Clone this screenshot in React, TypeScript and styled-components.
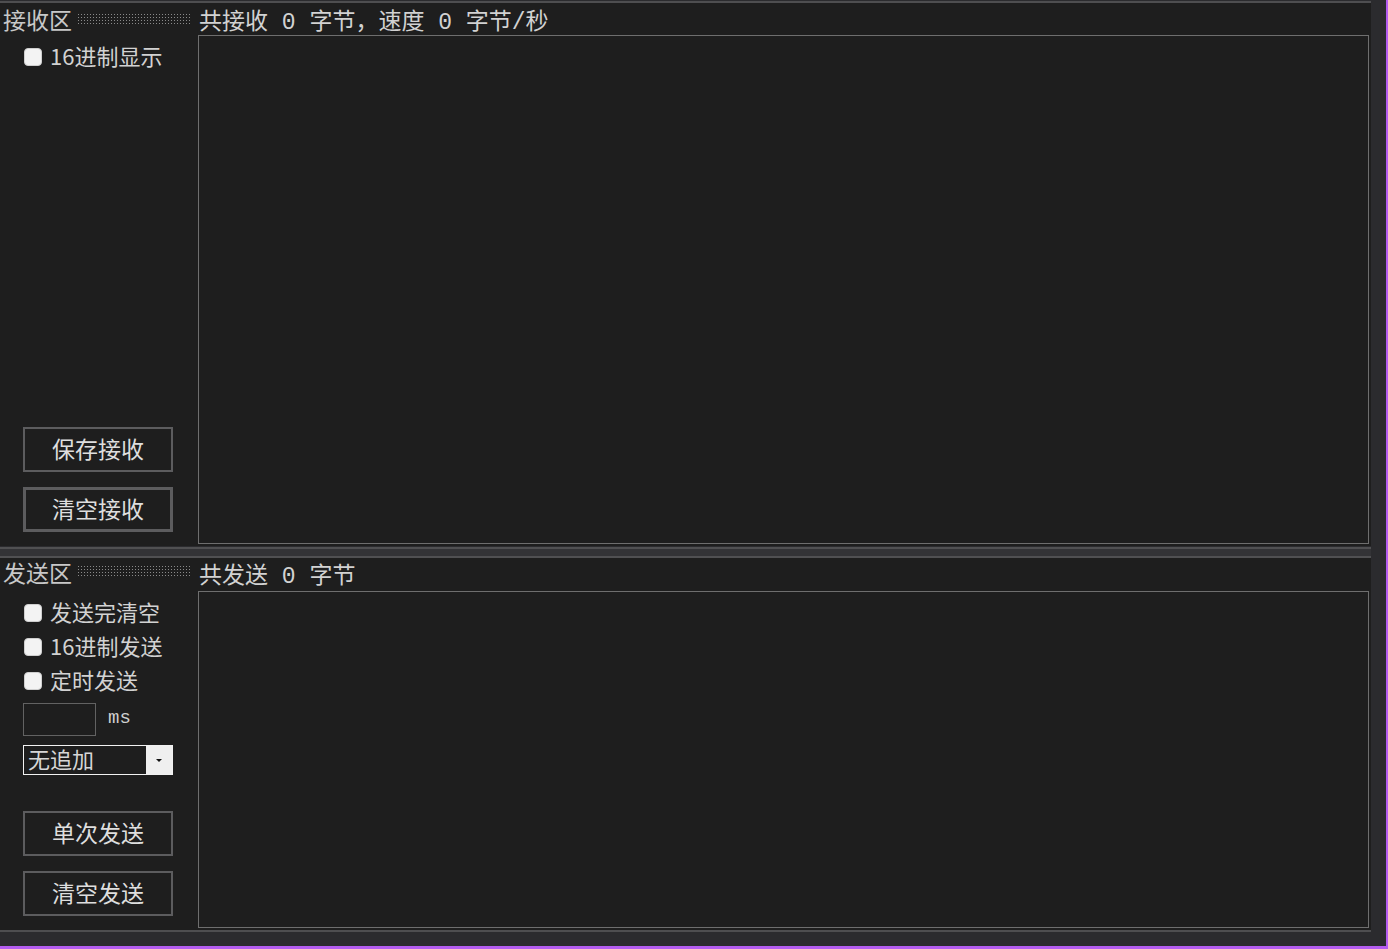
import React from "react";
import styled, { createGlobalStyle } from "styled-components";

const Global = createGlobalStyle`
  html, body { margin: 0; padding: 0; background: #2b2b2e; }
  body { font-family: "Noto Sans CJK SC", "Liberation Sans", sans-serif; }
  * { box-sizing: border-box; }
`;

const MONO = `"Liberation Mono", "Noto Sans CJK SC", monospace`;

const Frame = styled.div`
  width: 1388px;
  height: 949px;
  display: flex;
  background: #2b2b2e;
  border-right: 2px solid #b45cf0;
  border-bottom: 3px solid #b45cf0;
  overflow: hidden;
`;

const Main = styled.div`
  width: 1371px;
  display: flex;
  flex-direction: column;
`;

const Rule = styled.div<{ $top?: number }>`
  height: 2px;
  margin-top: ${(p) => p.$top ?? 0}px;
  background: #4e4e50;
`;

const Separator = styled.div`
  height: 11px;
  margin-top: 1px;
  background: #333336;
  border-top: 2px solid #505052;
  border-bottom: 2px solid #505052;
`;

const Panel = styled.section<{ $height: number; $head: number }>`
  height: ${(p) => p.$height}px;
  background: #1e1e1e;
  display: grid;
  grid-template-columns: 198px 1fr;
  grid-template-rows: ${(p) => p.$head}px 1fr;
  padding: 0 2px 2px 0;
  color: #d2d2d2;
  font-size: 22px;
`;

const HeadLeft = styled.div<{ $top?: number; $bottom?: number }>`
  display: flex;
  align-items: center;
  padding-left: 3px;
  padding-top: ${(p) => p.$top ?? 0}px;
  padding-bottom: ${(p) => p.$bottom ?? 0}px;
  gap: 6px;
`;

const Title = styled.span`
  color: #c8c8c8;
  font-size: 23px;
  line-height: 1;
  white-space: nowrap;
`;

const Dots = styled.span`
  width: 114px;
  height: 12px;
  background-image: linear-gradient(to right, transparent 1px, #1e1e1e 1px),
    linear-gradient(to bottom, #8a8a8a 1px, #1e1e1e 1px);
  background-size: 3px 3px, 3px 3px;
`;

const Stats = styled.div<{ $bottom: number }>`
  display: flex;
  align-items: flex-end;
  padding-left: 1px;
  padding-bottom: ${(p) => p.$bottom}px;
  white-space: pre;
  line-height: 1;
  font-family: ${MONO};
  font-size: 23px;
  color: #d2d2d2;
`;

const TextBox = styled.div`
  border: 1px solid #6e6e6e;
  background: #1e1e1e;
`;

const Side = styled.div<{ $pad: number }>`
  display: flex;
  flex-direction: column;
  padding: ${(p) => p.$pad}px 0 12px 23px;
`;

const CheckRow = styled.label<{ $gap?: number }>`
  display: flex;
  align-items: center;
  height: 18px;
  gap: 8px;
  margin-bottom: ${(p) => p.$gap ?? 16}px;
  padding-left: 1px;
  line-height: 1;
  white-space: nowrap;
`;

const CheckText = styled.span`
  margin-bottom: 5px;
`;

const Box = styled.span`
  width: 18px;
  height: 18px;
  border-radius: 4px;
  background: #f3f3f3;
  border: 1px solid #cfcfcf;
  flex: none;
`;

const IntervalRow = styled.div`
  display: flex;
  align-items: center;
  gap: 12px;
  margin-bottom: 9px;
`;

const Interval = styled.div`
  width: 73px;
  height: 33px;
  border: 1px solid #626262;
`;

const Unit = styled.span`
  font-family: ${MONO};
  font-size: 19px;
  color: #cfcfcf;
  margin-top: -3px;
`;

const Select = styled.div`
  width: 150px;
  height: 30px;
  border: 1px solid #f2f2f2;
  display: flex;
  background: #1e1e1e;
`;

const SelectText = styled.span`
  flex: 1;
  padding-left: 4px;
  line-height: 24px;
  color: #d6d6d6;
`;

const SelectArrow = styled.span`
  width: 26px;
  background: #efefef;
  display: flex;
  align-items: center;
  justify-content: center;
  &::after {
    content: "";
    border-left: 3px solid transparent;
    border-right: 3px solid transparent;
    border-top: 3px solid #111;
  }
`;

const Buttons = styled.div`
  margin-top: auto;
  display: flex;
  flex-direction: column;
  gap: 15px;
`;

const Button = styled.button<{ $thick?: boolean }>`
  width: 150px;
  height: 45px;
  background: #1e1e1e;
  border: ${(p) => (p.$thick ? 3 : 2)}px solid #5c5c5e;
  color: #dedede;
  font-family: "Noto Sans CJK SC", sans-serif;
  font-size: 23px;
  padding: 0 0 2px;
  line-height: 1;
`;

const Check = ({ label, gap }: { label: string; gap?: number }) => (
  <CheckRow $gap={gap}>
    <Box />
    <CheckText>{label}</CheckText>
  </CheckRow>
);

export default function App() {
  return (
    <>
      <Global />
      <Frame>
        <Main>
          <Rule $top={1} />
          <Panel $height={543} $head={32}>
            <HeadLeft $top={1}>
              <Title>接收区</Title>
              <Dots />
            </HeadLeft>
            <Stats $bottom={0}>{"共接收 0 字节，速度 0 字节/秒"}</Stats>
            <Side $pad={13}>
              <Check label="16进制显示" />
              <Buttons>
                <Button>保存接收</Button>
                <Button $thick>清空接收</Button>
              </Buttons>
            </Side>
            <TextBox />
          </Panel>
          <Separator />
          <Panel $height={372} $head={33}>
            <HeadLeft $bottom={5}>
              <Title>发送区</Title>
              <Dots />
            </HeadLeft>
            <Stats $bottom={2}>{"共发送 0 字节"}</Stats>
            <Side $pad={13}>
              <Check label="发送完清空" />
              <Check label="16进制发送" />
              <Check label="定时发送" gap={13} />
              <IntervalRow>
                <Interval />
                <Unit>ms</Unit>
              </IntervalRow>
              <Select>
                <SelectText>无追加</SelectText>
                <SelectArrow />
              </Select>
              <Buttons>
                <Button>单次发送</Button>
                <Button>清空发送</Button>
              </Buttons>
            </Side>
            <TextBox />
          </Panel>
          <Rule />
        </Main>
      </Frame>
    </>
  );
}
